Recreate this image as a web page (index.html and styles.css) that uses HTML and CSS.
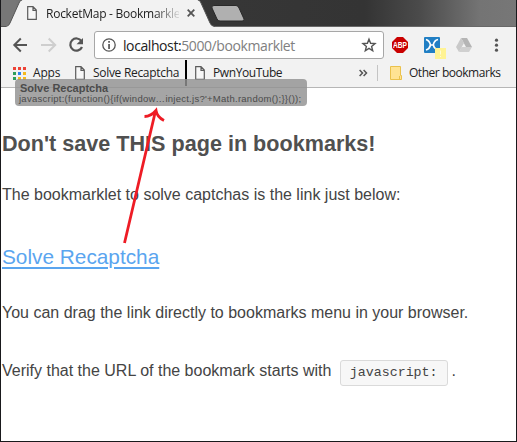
FILE: index.html
```html
<!DOCTYPE html>
<html lang="en">
<head>
<meta charset="utf-8">
<title>RocketMap - Bookmarklet</title>
<link rel="stylesheet" href="styles.css">
</head>
<body>
<div class="window">
  <header class="tabs">
    <svg class="tab-shape" width="260" height="27" viewBox="0 0 260 27">
      <path d="M0 27V26H6Q9 26 10 23L19 3Q20 0 23 0H197Q200 0 201 3L210 23Q211 26 215 27Z" fill="#f2f2f2"/>
      <path d="M0 26.500H6Q9 26 10 23L19 3Q20 0 22 0M198 0Q200 0 201 3L210 23Q211 26 215 26.500" fill="none" stroke="#555"/>
      <path d="M214 5.500H236Q238 5.500 239 8L244 19Q245 21 242 21H220Q218 21 217 19L212 8Q211 5.500 214 5.500Z" fill="#b0b0b0" stroke="#292929"/>
    </svg>
    <div class="tab">
      <svg class="page-icon" width="10" height="14" viewBox="0 0 10 14"><path d="M.7.7H6L9.300 4V13.300H.7ZM6 .7V4.300H9.300" fill="#fff" fill-opacity=".4" stroke="#5b5b5b" stroke-width="1.200"/></svg>
      <span class="tab-title">RocketMap - Bookmarkle</span>
      <svg class="close" width="8" height="8" viewBox="0 0 8 8"><path d="M.7.7 7.300 7.300M7.300.7.7 7.300" stroke="#555" stroke-width="1.800"/></svg>
    </div>
  </header>
  <div class="toolbar">
    <svg width="82" height="36" viewBox="0 0 82 36" fill="none">
      <path d="M26 18H14M19.800 11.500 13.300 18 19.800 24.500" stroke="#555" stroke-width="2"/>
      <path d="M40 18H53M47.700 11.500 54.200 18 47.700 24.500" stroke="#cecece" stroke-width="2"/>
      <path d="M80.500 14.200A6.100 6.100 0 1 0 81 20" stroke="#555" stroke-width="2.200"/>
      <path d="M82 11V17.200H75.500Z" fill="#555"/>
    </svg>
    <div class="address">
      <svg width="14" height="14" viewBox="0 0 14 14"><circle cx="7" cy="7" r="6.200" fill="none" stroke="#555" stroke-width="1.300"/><path d="M6.200 3h1.700v1.700H6.200zM6.200 6h1.700v5H6.200z" fill="#555"/></svg>
      <span class="url">localhost:<span>5000/bookmarklet</span></span>
      <svg class="star" width="14" height="14" viewBox="0 0 14 14"><path d="M7 1.200 8.600 5.300 13 5.600 9.600 8.400 10.700 12.800 7 10.400 3.300 12.800 4.400 8.400 1 5.600 5.400 5.300Z" fill="none" stroke="#555" stroke-width="1.400"/></svg>
    </div>
    <svg class="extensions" width="112" height="36" viewBox="0 0 112 36">
      <path d="M6 10H12L17 15V21L12 26H6L1 21V15Z" fill="#c90000"/>
      <text x="2" y="21" textLength="14" lengthAdjust="spacingAndGlyphs" class="abp">ABP</text>
      <rect x="33" y="10" width="16" height="16" rx="1" fill="#217fc4"/>
      <path d="M35 12.500Q38.500 13.500 39.500 18Q38.500 22 35 23M47 12.500Q43 13.500 42.300 18Q43 21 45 22M39.500 18H42.300" fill="none" stroke="#fff" stroke-width="1.700"/>
      <rect x="44" y="21" width="11" height="11" fill="#fff394"/><path d="M49 23.500h1v4h-1zM49 29h1v1h-1z" fill="#fffbd8"/>
      <path d="M70 11H76L81 20H75Z" fill="#b5b5b5"/>
      <path d="M70 11 65 20 68 25 73 16Z" fill="#c9c9c9"/>
      <path d="M70.500 20H81L78 25H68Z" fill="#d0d0d0"/>
      <g fill="#555"><circle cx="105.500" cy="13.200" r="1.600"/><circle cx="105.500" cy="18.200" r="1.600"/><circle cx="105.500" cy="23.200" r="1.600"/></g>
    </svg>
  </div>
  <nav class="bookmarks">
    <svg class="apps-icon" width="13" height="13" viewBox="0 0 13 13">
      <path d="M0 0h3v3H0zM5 0h3v3H5zM10 0h3v3h-3z" fill="#ed4336"/><path d="M0 5h3v3H0z" fill="#2f9e5b"/><path d="M5 5h3v3H5z" fill="#2d83ee"/><path d="M10 5h3v3h-3zM5 10h3v3H5zM10 10h3v3h-3z" fill="#f4b91d"/><path d="M0 10h3v3H0z" fill="#2f9e5b"/>
    </svg>
    <span class="label apps">Apps</span>
    <svg class="page-icon" width="10" height="14" viewBox="0 0 10 14"><path d="M.7.7H6L9.300 4V13.300H.7ZM6 .7V4.300H9.300" fill="#fff" fill-opacity=".4" stroke="#5b5b5b" stroke-width="1.200"/></svg>
    <span class="label solve">Solve Recaptcha</span>
    <i class="drop-marker"></i>
    <svg class="page-icon" width="10" height="14" viewBox="0 0 10 14"><path d="M.7.7H6L9.300 4V13.300H.7ZM6 .7V4.300H9.300" fill="#fff" fill-opacity=".4" stroke="#5b5b5b" stroke-width="1.200"/></svg>
    <span class="label pwn">PwnYouTube</span>
    <svg class="more" width="8" height="8" viewBox="0 0 8 8"><path d="M.6 1 3.500 4 .6 7M4.600 1 7.500 4 4.600 7" fill="none" stroke="#555" stroke-width="1.500"/></svg>
    <i class="divider"></i>
    <svg class="folder" width="12" height="15" viewBox="0 0 12 15"><path d="M.5.5H10.500V9.500H11.500V13.500H.5Z" fill="#ffe393" stroke="#eac14b"/><path d="M9.500 13V10" stroke="#eac14b"/></svg>
    <span class="label other">Other bookmarks</span>
  </nav>
  <main>
    <h1>Don't save THIS page in bookmarks!</h1>
    <p class="intro">The bookmarklet to solve captchas is the link just below:</p>
    <p class="link"><a href="#">Solve Recaptcha</a></p>
    <p class="drag">You can drag the link directly to bookmarks menu in your browser.</p>
    <p class="verify">Verify that the URL of the bookmark starts with <code>javascript:</code>.</p>
  </main>
  <div class="drag-ghost"><b>Solve Recaptcha</b><span>javascript:(function(){if(window…inject.js?'+Math.random();}}());</span></div>
  <svg class="arrow" width="30" height="140" viewBox="0 0 30 140"><path d="M5.500 138 36.500 6M25.500 11.500Q32 11.500 37 5.500Q38 12 45 15.500" fill="none" stroke="#ee1c25" stroke-width="2.800"/></svg>
</div>
</body>
</html>
```
FILE: styles.css
```css
* { box-sizing: border-box; }
body { margin: 0; overflow: hidden; background: #fff; }
svg { display: block; flex: none; overflow: visible; }
.window {
  position: relative;
  width: 517px;
  height: 442px;
  border: solid #19191c;
  border-width: 0 1px 1px;
  overflow: hidden;
  font-family: "Open Sans", sans-serif;
}
.tabs {
  position: relative;
  height: 27px;
  margin: 0 -1px;
  border-bottom: 1px solid #686868;
  background: linear-gradient(90deg, #777 0, #777 15px, #383838 100px, #343434 365px, #4b4b4b 420px, #747474 480px, #777 517px);
}
.tab-shape { position: absolute; left: 0; top: 0; }
.tab { position: relative; display: flex; align-items: center; height: 26px; padding-left: 27px; }
.tab-title {
  width: 133px;
  margin-left: 9px;
  white-space: nowrap;
  font-size: 12px;
  color: #222;
  letter-spacing: -0.25px;
  -webkit-mask-image: linear-gradient(90deg, #000 108px, transparent 136px);
  mask-image: linear-gradient(90deg, #000 108px, transparent 136px);
}
.close { margin-left: 8px; }
.toolbar { display: flex; height: 36px; background: #f2f2f2; }
.address {
  display: flex;
  align-items: center;
  width: 290px;
  height: 28px;
  margin: 4px 0 0 11px;
  padding: 0 7px;
  border: 1px solid #a7a7a7;
  border-radius: 3px;
  background: #fff;
}
.url { margin-left: 7px; font-size: 14px; letter-spacing: -0.41px; color: #222; white-space: nowrap; }
.url span { color: #808080; }
.star { margin-left: auto; }
.extensions { margin-left: 7px; }
.abp { font: bold 8.500px "Liberation Sans", sans-serif; fill: #fff; }
.bookmarks {
  display: flex;
  align-items: center;
  height: 25px;
  padding: 0 15px 4px 12px;
  background: #f2f2f2;
  border-bottom: 1px solid #b6b6b6;
}
.label { font-size: 12px; line-height: 18px; color: #222; white-space: nowrap; }
.apps { width: 34px; margin-left: 7px; letter-spacing: -0.2px; }
.bookmarks .page-icon { margin-left: 8px; }
.solve { width: 87px; margin-left: 8px; letter-spacing: -0.3px; }
.drop-marker { align-self: flex-start; width: 2px; height: 26px; margin: -3px 0 0 5px; background: #000; flex: none; }
.pwn { margin-left: 8px; letter-spacing: -0.4px; }
.more { margin-left: auto; }
.divider { width: 1px; height: 16px; margin: 0 12px 0 10px; background: #c4c4c4; }
.folder { margin-right: 7px; }
.other { width: 92px; letter-spacing: -0.47px; }
main { padding-left: 1px; color: #444; font-family: "Liberation Sans", sans-serif; font-size: 16px; }
h1, p { margin: 0; white-space: nowrap; }
h1 { padding-top: 41px; font-size: 21.600px; line-height: 30px; color: #505050; }
.intro { padding-top: 24px; line-height: 24px; }
.link { padding-top: 34px; font-size: 20.800px; line-height: 32px; }
a { color: #5aa5ef; text-decoration: underline; text-decoration-thickness: 2px; text-underline-offset: 3px; }
.drag { padding-top: 28px; line-height: 24px; }
.verify { padding-top: 33px; line-height: 26px; }
code {
  display: inline-block;
  margin: 0 4px;
  padding: 0 9px;
  border: 1px solid #dadada;
  border-radius: 3px;
  background: #f7f7f7;
  font: 13.300px/24px "Liberation Mono", monospace;
}
.drag-ghost {
  position: absolute;
  left: 14px;
  top: 79px;
  width: 292px;
  height: 27px;
  padding: 3px 4px;
  border-radius: 4px;
  background: rgba(145, 145, 145, .82);
  color: #4b4b4b;
  font-family: "Liberation Sans", sans-serif;
  white-space: nowrap;
}
.drag-ghost b { display: block; padding-left: 1px; font-size: 11px; line-height: 12px; }
.drag-ghost span { display: block; font-size: 9.500px; line-height: 10px; letter-spacing: .26px; }
.arrow { position: absolute; left: 118px; top: 105px; }
```
